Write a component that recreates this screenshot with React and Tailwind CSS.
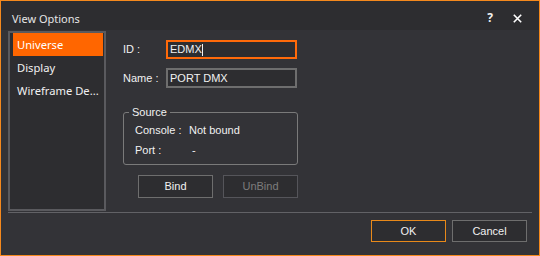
export default function App() {
  return (
    <div className="w-[540px] h-[256px] border border-[#f5891d] bg-[#333337] flex flex-col text-[11px] leading-none text-[#f1f1f1] font-['Liberation_Sans',Arial,sans-serif]">
      <div className="h-[29px] bg-[#2d2d30] flex items-center justify-between pl-[11px] pr-[17px] pt-[5px] shrink-0">
        <span className="text-[#e6e6e6] text-[11px] font-['Noto_Sans',sans-serif]">View Options</span>
        <div className="flex items-center gap-[20px]">
          <span className="font-bold text-[12px] text-[#f1f1f1] font-['Noto_Sans',sans-serif]">?</span>
          <svg width="9" height="9" viewBox="0 0 9 9">
            <path d="M0.8 0.8L8.2 8.2M8.2 0.8L0.8 8.2" stroke="#ffffff" strokeWidth="1.6" />
          </svg>
        </div>
      </div>
      <div className="flex pl-[7px] pt-[1px]">
        <div className="w-[98px] h-[180px] border-2 border-[#5a5a5e] bg-[#2d2d30] pl-[3px] pr-[1px] flex flex-col text-[11.2px] font-['Noto_Sans',sans-serif]">
          <div className="h-[23px] bg-[#ff6600] flex items-center pl-[4px] text-white">Universe</div>
          <div className="h-[23px] flex items-center pl-[4px]">Display</div>
          <div className="h-[23px] flex items-center pl-[4px] whitespace-nowrap">Wireframe De...</div>
        </div>
        <div className="ml-[17px] flex flex-col">
          <div className="mt-[9px] flex items-center">
            <span className="w-[43px]">ID :</span>
            <div className="w-[131px] h-[19px] border-2 border-[#ff6a0a] bg-[#2d2d30] px-[2px] flex items-center">
              <span>EDMX</span>
              <span className="w-px h-[12px] bg-[#f1f1f1]"></span>
            </div>
          </div>
          <div className="mt-[9px] flex items-center">
            <span className="w-[43px]">Name :</span>
            <div className="w-[131px] h-[20px] border-2 border-[#6e6e6e] bg-[#2d2d30] px-[2px] flex items-center">
              <span>PORT DMX</span>
            </div>
          </div>
          <fieldset className="mt-[16px] w-[175px] border border-[#7a7a7a] rounded-[3px] pl-[11px] pb-[4px]">
            <legend className="ml-[-6px] px-[3px] h-[16px] flex items-center">Source</legend>
            <div className="h-[20px] flex items-center">
              <span className="w-[54px]">Console :</span>
              <span>Not bound</span>
            </div>
            <div className="h-[20px] flex items-center">
              <span className="w-[54px]">Port :</span>
              <span className="ml-[3px]">-</span>
            </div>
          </fieldset>
          <div className="mt-[10px] ml-[15px] flex gap-[10px]">
            <button className="w-[75px] h-[23px] border border-[#6e6e6e] bg-[#2d2d30] flex items-center justify-center">Bind</button>
            <button className="w-[75px] h-[23px] border border-[#55555a] bg-[#2d2d30] text-[#7d7d7d] flex items-center justify-center">UnBind</button>
          </div>
        </div>
      </div>
      <div className="mt-[1px] mx-[7px] h-px bg-[#626266]"></div>
      <div className="mt-[7px] flex justify-end pr-[12px] gap-[6px]">
        <button className="w-[75px] h-[22px] border border-[#e8891a] bg-[#2d2d30] flex items-center justify-center">OK</button>
        <button className="w-[75px] h-[22px] border border-[#6e6e6e] bg-[#2d2d30] flex items-center justify-center">Cancel</button>
      </div>
    </div>
  );
}
